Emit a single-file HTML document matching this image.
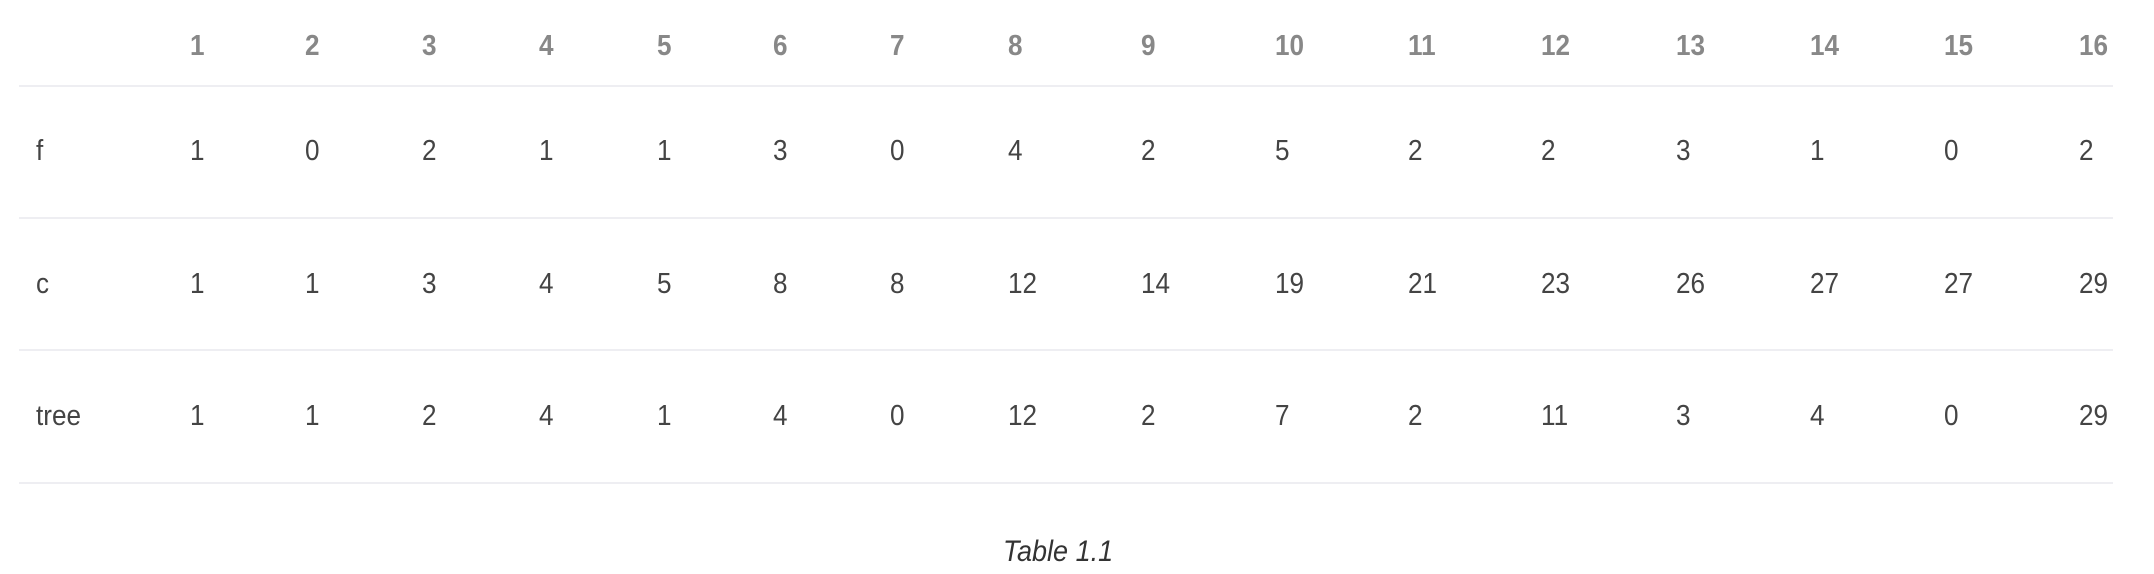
<!DOCTYPE html>
<html><head><meta charset="utf-8"><style>
body{margin:0;width:2154px;height:574px;background:#fff;font-family:"Liberation Sans",sans-serif;position:relative;overflow:hidden}
.t{position:absolute;font-size:29px;line-height:30px;color:#444;transform:scaleX(0.9);transform-origin:left center}
.h{color:#888;font-weight:bold}
.l{position:absolute;left:19px;width:2094px;height:2px;background:#eeeef2}
.cap{position:absolute;left:1003px;top:535px;font-size:30px;font-style:italic;color:#333;transform:scaleX(0.9);transform-origin:left center}
</style></head><body>
<div class="l" style="top:85px"></div>
<div class="l" style="top:217px"></div>
<div class="l" style="top:349px"></div>
<div class="l" style="top:482px"></div>
<div id="c"></div>
<div class="cap">Table 1.1</div>
<script>
var xs=[190,305,422,539,657,773,890,1008,1141,1275,1408,1541,1676,1810,1944,2079];
var rows=[
 {y:31,lab:"",h:1,v:[1,2,3,4,5,6,7,8,9,10,11,12,13,14,15,16]},
 {y:136,lab:"f",v:[1,0,2,1,1,3,0,4,2,5,2,2,3,1,0,2]},
 {y:269,lab:"c",v:[1,1,3,4,5,8,8,12,14,19,21,23,26,27,27,29]},
 {y:401,lab:"tree",v:[1,1,2,4,1,4,0,12,2,7,2,11,3,4,0,29]}];
var s="";
rows.forEach(function(r){
 if(r.lab)s+='<div class="t" style="left:36px;top:'+r.y+'px">'+r.lab+'</div>';
 r.v.forEach(function(v,i){s+='<div class="t'+(r.h?' h':'')+'" style="left:'+xs[i]+'px;top:'+r.y+'px">'+v+'</div>';});
});
document.getElementById('c').innerHTML=s;
</script>
</body></html>
